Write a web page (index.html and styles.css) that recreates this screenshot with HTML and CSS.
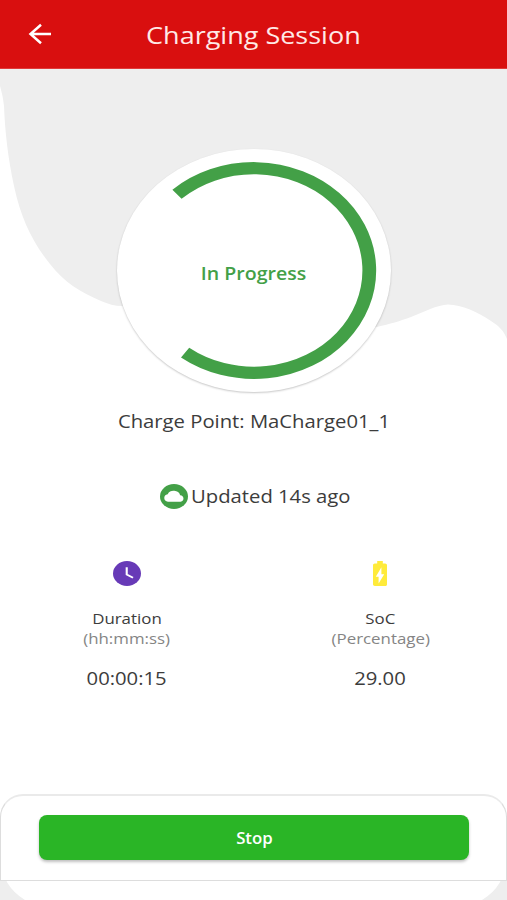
FILE: index.html
```html
<!DOCTYPE html>
<html lang="en">
<head>
<meta charset="utf-8">
<title>Charging Session</title>
<link rel="stylesheet" href="styles.css">
</head>
<body>
<div class="screen">
  <svg class="backdrop" viewBox="0 0 507 900" aria-hidden="true">
    <path fill="#eee" d="M0 69H507V339C504 331 499 326 491 321C478 312 462 305 448 304.500C437 305 424 312 411 317C400 321 390 324 377 327L250 340L122 306C115 306 108 304 101 301C80 292 65 283 50 264C33 243 21 219 14 186C8 158 5 132 4 106C3 96 1 90 0 86Z"/>
    <path fill="#eee" d="M0 860H1Q2 886 25 900H0ZM507 860H506Q505 886 482 900H507Z"/>
  </svg>
  <header class="bar">
    <svg class="back" viewBox="0 0 24 22" fill="none" stroke="#fff" stroke-width="2.500"><path d="M23 11H2M13 1.800L2.500 11L13 20.200"/></svg>
    <h1 class="title"><span class="wide">Charging Session</span></h1>
  </header>
  <main class="content">
    <div class="dial">
      <svg class="ring" viewBox="-121.500 -121.500 243 243" preserveAspectRatio="none"><path fill="none" stroke="#43a047" stroke-width="12.200" d="M-68.300 -76.200A102.300 102.300 0 1 1 -61.100 82.100"/></svg>
      <span class="status wide">In Progress</span>
    </div>
    <p class="point"><span class="wide">Charge Point: MaCharge01_1</span></p>
    <div class="updated">
      <svg class="cloud" viewBox="0 0 20 20" preserveAspectRatio="none"><circle cx="10" cy="10" r="10" fill="#43a047"/><path fill="#fff" d="M5.700 14.200A3.100 3.100 0 0 1 5.500 8.100A4.800 4.800 0 0 1 14.400 8.900A2.700 2.700 0 0 1 14.700 14.200Z"/></svg>
      <span class="ago"><span class="wide">Updated 14s ago</span></span>
    </div>
    <section class="stats">
      <div class="stat">
        <svg class="icon" viewBox="0 0 20 20" preserveAspectRatio="none"><circle cx="10" cy="10" r="10" fill="#673ab7"/><path d="M9.800 5V10.800L14.300 13.400" fill="none" stroke="#fff" stroke-width="1.500"/></svg>
        <span class="name wide">Duration</span>
        <span class="unit wide">(hh:mm:ss)</span>
        <span class="value wide">00:00:15</span>
      </div>
      <div class="stat">
        <svg class="icon" viewBox="2 2 20 20" preserveAspectRatio="none"><path fill="#ffeb3b" d="M15.700 4H14V2h-4v2H8.300C7.600 4 7 4.600 7 5.300v15.300c0 .8.600 1.400 1.300 1.400h7.300c.8 0 1.400-.6 1.400-1.300V5.300C17 4.600 16.400 4 15.700 4z"/><path fill="#fff" d="M11 20v-5.500H9L13 7v5.500h2L11 20z"/></svg>
        <span class="name wide">SoC</span>
        <span class="unit wide">(Percentage)</span>
        <span class="value wide">29.00</span>
      </div>
    </section>
  </main>
  <footer class="panel">
    <button class="stop"><span class="wide">Stop</span></button>
  </footer>
</div>
</body>
</html>
```
FILE: styles.css
```css
* { box-sizing: border-box; }
body { margin: 0; background: #fff; color: #3c3c3c; font-family: "Open Sans", sans-serif; }
.screen { position: relative; isolation: isolate; width: 507px; height: 900px; overflow: hidden; display: flex; flex-direction: column; }
.backdrop { position: absolute; inset: 0; z-index: -1; width: 507px; height: 900px; }
.wide { display: inline-block; white-space: nowrap; transform: scaleX(1.125); }
.bar { height: 69px; background: #d90f0f; display: grid; grid-template-columns: 52px 1fr 52px; align-items: center; border-bottom: 1px solid #e03a3a; }
.back { width: 24px; height: 22px; margin-left: 28px; }
.title { margin: 2px 0 0; text-align: center; font-size: 24px; font-weight: 400; line-height: 32px; color: #ffe9e6; }
.content { display: flex; flex-direction: column; align-items: center; padding-top: 80px; }
.dial { width: 274px; height: 243px; border-radius: 50%; background: #fff; display: grid; place-items: center; box-shadow: 0 1px 2px rgba(0,0,0,.22); }
.dial > * { grid-area: 1 / 1; }
.ring { width: 274px; height: 243px; }
.status { font-size: 18px; line-height: 24px; font-weight: 600; color: #43a047; margin-top: 4px; }
.dial .status { transform: scaleX(1.085); }
.point { margin: 16px 0 0; font-size: 18px; line-height: 26px; }
.updated { width: 188px; margin-top: 49px; display: flex; align-items: center; gap: 3px; height: 26px; }
.cloud { width: 28px; height: 25px; }
.ago { font-size: 18px; line-height: 26px; }
.ago .wide { transform-origin: left; }
.stats { width: 507px; margin-top: 52px; display: grid; grid-template-columns: 1fr 1fr; }
.stat { display: flex; flex-direction: column; align-items: center; }
.icon { width: 28px; height: 25px; }
.name { margin-top: 22px; font-size: 15px; line-height: 20px; }
.unit { font-size: 15px; line-height: 20px; color: #858585; }
.value { margin-top: 18px; font-size: 18px; line-height: 24px; }
.panel { margin-top: auto; margin-bottom: 19px; height: 87px; padding: 19px 37px 0 38px; border: 1px solid #ddd; border-top: 2px solid #eaeaea; border-radius: 23px 23px 0 0; background: #fff; display: flex; align-items: flex-start; }
.stop { flex: 1; height: 45px; padding: 1px 0 0; border: 0; border-radius: 8px; background: #2ab526; color: #fff; font: 600 16px/24px "Open Sans", sans-serif; box-shadow: 0 2px 3px rgba(0,0,0,.25); }
.stop .wide { transform: scaleX(1.05); }
```
